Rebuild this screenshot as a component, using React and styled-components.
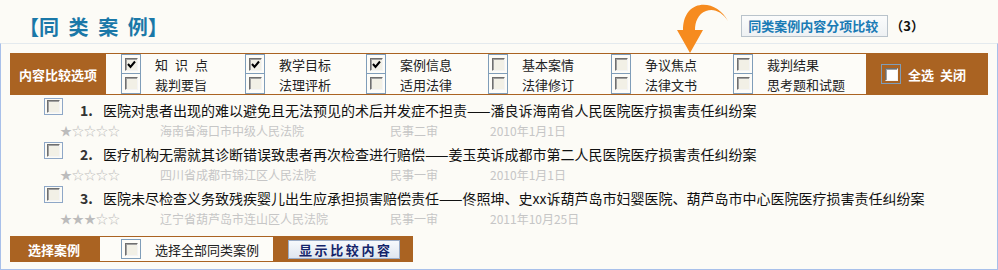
import React from "react";
import styled, { createGlobalStyle } from "styled-components";

const GlobalStyle = createGlobalStyle`
  html, body { margin: 0; padding: 0; background: #fcfbf6; }
  body { font-family: "Noto Sans CJK SC", "Liberation Sans", sans-serif; }
  * { box-sizing: border-box; }
`;

const BROWN = "#aa6322";
const CREAM = "#fdfcf8";

const Page = styled.div`
  width: 998px;
  height: 270px;
  display: flex;
  flex-direction: column;
  background: #fcfbf6;
  font-family: "Noto Sans CJK SC", "Liberation Sans", sans-serif;
`;

const Header = styled.header`
  position: relative;
  height: 43px;
  display: flex;
  align-items: flex-start;
  padding-left: 19px;
`;

const Title = styled.h1`
  margin: 15px 0 0;
  font-size: 20px;
  line-height: 24px;
  font-weight: 700;
  color: #1a78a8;
  display: flex;
`;

const TitleWords = styled.span`
  display: flex;
  gap: 9.6px;
`;

const RightGroup = styled.div`
  margin-left: auto;
  margin-right: 74px;
  margin-top: 15px;
  display: flex;
  align-items: center;
`;

const CompareButton = styled.button`
  height: 22px;
  padding: 0 6px;
  border: 1px solid #b9c3cb;
  background: linear-gradient(#fbfcfc, #eef1f3);
  color: #1a7bb5;
  font-family: inherit;
  font-size: 13px;
  font-weight: 700;
  line-height: 20px;
  width: 147px;
  text-align: left;
`;

const Count = styled.span`
  margin-left: 2px;
  font-size: 13px;
  font-weight: 700;
  color: #111;
  line-height: 22px;
`;

const ArrowSvg = styled.svg`
  position: absolute;
  left: 670px;
  top: 0;
  width: 64px;
  height: 56px;
  z-index: 2;
`;

const Panel = styled.section`
  flex: 1;
  border-left: 1px solid #a8c0ea;
  border-right: 1px solid #a8c0ea;
  border-bottom: 1px solid #a8c0ea;
  border-top: 1px solid #e4eaee;
  padding: 9px 8px 7px 9px;
  display: flex;
  flex-direction: column;
  background: #fcfbf6;
`;

const OptionsTable = styled.div`
  width: 978px;
  height: 42px;
  display: flex;
  background: ${BROWN};
`;

const LabelCell = styled.div`
  width: ${(p) => p.$w}px;
  padding-left: ${(p) => p.$pl || 0}px;
  display: flex;
  align-items: center;
  justify-content: ${(p) => (p.$center ? "center" : "flex-start")};
  color: #fff;
  font-size: 13px;
  font-weight: 700;
`;

const OptionsArea = styled.div`
  width: 760px;
  margin: 1px 0;
  background: ${CREAM};
  padding-left: 15px;
  display: grid;
  grid-template-columns: 124px 121px 122px 123px 122px auto;
  grid-auto-flow: column;
  grid-template-rows: 20px 20px;
`;

const OptionRow = styled.label`
  display: flex;
  align-items: center;
  height: 20px;
  font-size: 13px;
  color: #222;
`;

const CheckCell = styled.span`
  width: 20px;
  height: 20px;
  border: 1px solid #7f9db9;
  border-top: ${(p) => (p.$second ? "none" : "1px solid #7f9db9")};
  display: flex;
  align-items: center;
  justify-content: center;
  margin-right: 14px;
`;

const OptionText = styled.span`
  letter-spacing: ${(p) => (p.$spaced ? "7px" : "0")};
  margin-left: ${(p) => p.$ml || 0}px;
`;

const CheckBox = styled.span`
  display: inline-flex;
  width: 13px;
  height: 13px;
  border: 1px solid;
  border-color: #6f6f6f #f4f4f4 #f4f4f4 #6f6f6f;
  box-shadow: inset 1px 1px 0 #a0a0a0;
  background: ${(p) => (p.$white ? "#ffffff" : "#f2f0e6")};
  align-items: center;
  justify-content: center;
  flex: none;
`;

const SelectAllCell = styled.div`
  width: 122px;
  display: flex;
  align-items: center;
  padding-left: 15px;
  color: #fff;
  font-size: 13px;
  font-weight: 700;
`;

const BigFrame = styled.span`
  width: 20px;
  height: 20px;
  border: 1px solid #7f9db9;
  display: flex;
  align-items: center;
  justify-content: center;
  margin-right: 7px;
`;

const CaseList = styled.ol`
  list-style: none;
  margin: 2px 0 0;
  padding: 0;
`;

const CaseItem = styled.li`
  height: 44px;
`;

const TitleRow = styled.div`
  display: flex;
  align-items: flex-start;
  height: 24px;
  padding-left: 34px;
`;

const CaseFrame = styled.span`
  width: 19px;
  height: 17px;
  margin-top: 1px;
  border: 1px solid #8ea7c7;
  display: flex;
  align-items: flex-start;
  padding: 1px 0 0 2px;
`;

const CaseNumber = styled.span`
  margin-left: 17px;
  width: 23px;
  margin-top: 3px;
  font-size: 14px;
  line-height: 20px;
  font-weight: 700;
  color: #333;
`;

const CaseTitle = styled.span`
  margin-top: 3px;
  font-size: 14px;
  line-height: 20px;
  color: #111;
  white-space: nowrap;
`;

const MetaRow = styled.div`
  display: grid;
  grid-template-columns: 100px 230px 100px auto;
  padding-left: 50px;
  height: 20px;
  line-height: 20px;
  font-size: 12px;
  color: #c6c6c6;
`;

const Stars = styled.span`
  color: #bcbcbc;
  font-size: 12px;
`;

const BottomBar = styled.div`
  margin-top: 7px;
  width: 403px;
  height: 26px;
  display: flex;
  background: ${BROWN};
`;

const BarCell = styled.div`
  width: 173px;
  margin: 1px 0;
  background: ${CREAM};
  display: flex;
  align-items: center;
  padding-left: 21px;
  font-size: 13px;
  color: #222;
`;

const ShowButton = styled.button`
  margin: 4px 0 0 15px;
  width: 112px;
  height: 19px;
  padding: 0 0 0 10px;
  border: 1px solid #9aabc6;
  background: linear-gradient(#f7f9fc, #dfe6ef);
  color: #14246a;
  font-family: inherit;
  font-size: 13px;
  font-weight: 700;
  line-height: 17px;
  letter-spacing: 2.6px;
  text-align: left;
`;

const Tick = () => (
  <svg width="9" height="9" viewBox="0 0 9 9">
    <polyline points="1,4 3.5,7 8,1.5" fill="none" stroke="#000" strokeWidth="2" />
  </svg>
);

const Check = ({ checked, white }) => (
  <CheckBox $white={white}>{checked ? <Tick /> : null}</CheckBox>
);

const options = [
  [{ t: "知识点", c: true, s: true }, { t: "裁判要旨" }],
  [{ t: "教学目标", c: true }, { t: "法理评析" }],
  [{ t: "案例信息", c: true }, { t: "适用法律" }],
  [{ t: "基本案情" }, { t: "法律修订" }],
  [{ t: "争议焦点" }, { t: "法律文书" }],
  [{ t: "裁判结果" }, { t: "思考题和试题" }],
];

const cases = [
  {
    n: "1.",
    title: "医院对患者出现的难以避免且无法预见的术后并发症不担责——潘良诉海南省人民医院医疗损害责任纠纷案",
    stars: "★☆☆☆☆",
    court: "海南省海口市中级人民法院",
    trial: "民事二审",
    date: "2010年1月1日",
  },
  {
    n: "2.",
    title: "医疗机构无需就其诊断错误致患者再次检查进行赔偿——姜玉英诉成都市第二人民医院医疗损害责任纠纷案",
    stars: "★☆☆☆☆",
    court: "四川省成都市锦江区人民法院",
    trial: "民事一审",
    date: "2010年1月1日",
  },
  {
    n: "3.",
    title: "医院未尽检查义务致残疾婴儿出生应承担损害赔偿责任——佟照坤、史xx诉葫芦岛市妇婴医院、葫芦岛市中心医院医疗损害责任纠纷案",
    stars: "★★★☆☆",
    court: "辽宁省葫芦岛市连山区人民法院",
    trial: "民事一审",
    date: "2011年10月25日",
  },
];

export default function App() {
  return (
    <>
      <GlobalStyle />
      <Page>
        <Header>
          <Title>
            <span>【</span>
            <TitleWords>
              {"同类案例".split("").map((ch) => (
                <span key={ch}>{ch}</span>
              ))}
            </TitleWords>
            <span>】</span>
          </Title>
          <ArrowSvg viewBox="0 0 64 56">
            <path
              d="M58 21 C50 5 30 -1 19 11 C14 17 13 24 13 30 L7 30 L20 53 L33 30 L25 30 C25 22 28 14 36 11 C44 8 52 12 58 21 Z"
              fill="#f68b1f"
            />
          </ArrowSvg>
          <RightGroup>
            <CompareButton>同类案例内容分项比较</CompareButton>
            <Count>（3）</Count>
          </RightGroup>
        </Header>
        <Panel>
          <OptionsTable>
            <LabelCell $w={96} $center>内容比较选项</LabelCell>
            <OptionsArea>
              {options.map((col) =>
                col.map((o, i) => (
                  <OptionRow key={o.t}>
                    <CheckCell $second={i === 1}>
                      <Check checked={o.c} />
                    </CheckCell>
                    <OptionText $spaced={o.s}>{o.t}</OptionText>
                  </OptionRow>
                ))
              )}
            </OptionsArea>
            <SelectAllCell>
              <BigFrame>
                <Check white />
              </BigFrame>
              全选&nbsp;&nbsp;关闭
            </SelectAllCell>
          </OptionsTable>
          <CaseList>
            {cases.map((c) => (
              <CaseItem key={c.n}>
                <TitleRow>
                  <CaseFrame>
                    <Check />
                  </CaseFrame>
                  <CaseNumber>{c.n}</CaseNumber>
                  <CaseTitle>{c.title}</CaseTitle>
                </TitleRow>
                <MetaRow>
                  <Stars>{c.stars}</Stars>
                  <span>{c.court}</span>
                  <span>{c.trial}</span>
                  <span>{c.date}</span>
                </MetaRow>
              </CaseItem>
            ))}
          </CaseList>
          <BottomBar>
            <LabelCell $w={90} $pl={18}>选择案例</LabelCell>
            <BarCell>
              <BigFrame>
                <Check />
              </BigFrame>
              <OptionText $ml={7}>选择全部同类案例</OptionText>
            </BarCell>
            <ShowButton>显示比较内容</ShowButton>
          </BottomBar>
        </Panel>
      </Page>
    </>
  );
}
